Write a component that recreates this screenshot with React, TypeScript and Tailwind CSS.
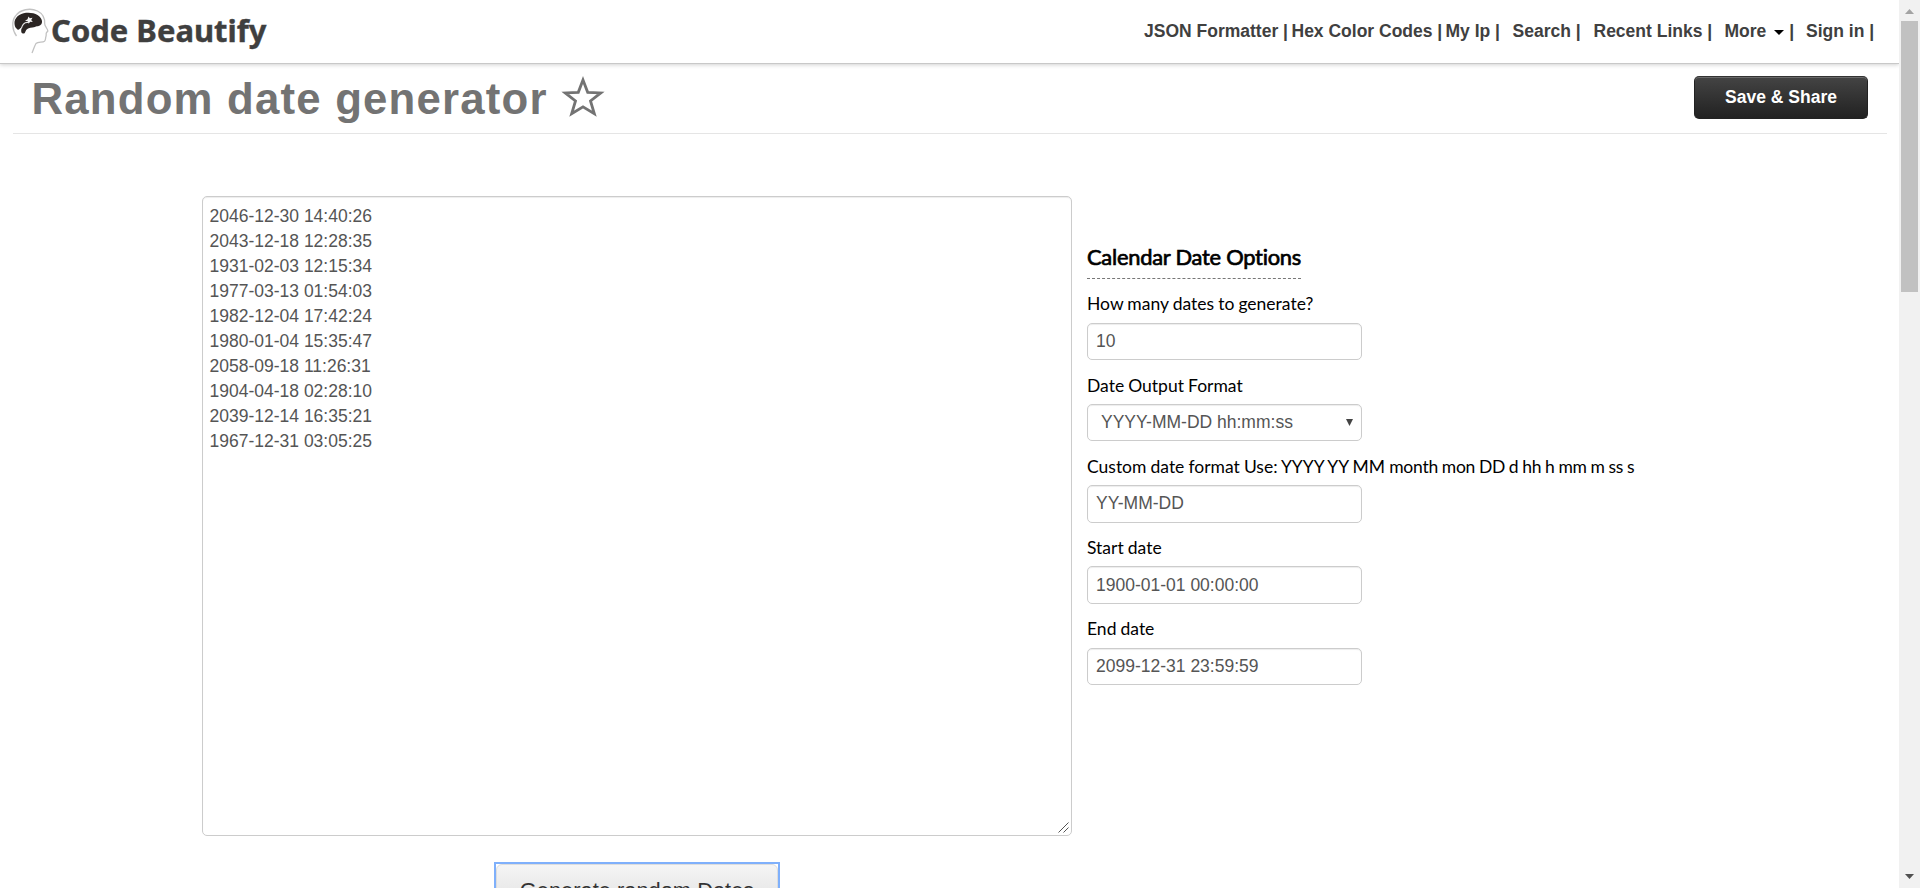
import type { ReactNode } from 'react';

const dates = [
  '2046-12-30 14:40:26',
  '2043-12-18 12:28:35',
  '1931-02-03 12:15:34',
  '1977-03-13 01:54:03',
  '1982-12-04 17:42:24',
  '1980-01-04 15:35:47',
  '2058-09-18 11:26:31',
  '1904-04-18 02:28:10',
  '2039-12-14 16:35:21',
  '1967-12-31 03:05:25',
];

function Logo() {
  return (
    <svg className="block h-[54px] w-[270px]" viewBox="0 0 270 54" role="img" aria-label="Code Beautify">
      <path
        d="M16.500 36C12 30 11.500 21 15.500 16C20 9.500 30 7.500 37.500 11C43.500 14 45 19 44.700 24C44.700 26 48 29.500 47.800 31C47.500 32 46.200 32.300 46.200 33.500C46.200 35 46.300 36 45.800 37C45.300 38.500 46 40 44.500 41.200C42.500 42.700 38 41.500 36 43.500C34.500 46 33.500 49.500 32 53"
        fill="none"
        stroke="#c2c2c2"
        strokeWidth="1.3"
      />
      <path
        d="M14.500 24C13.800 18 19.500 13.500 26 12.800C34 12 41.300 15.500 42 21C42.300 24.500 40 26 37 26.300C35.500 26.500 34.500 27.500 32.500 27.500C29.500 27.500 27.500 28.500 26.200 30C25 31.500 25.500 34 23 33.500C20.500 33 21.300 29.500 21.500 27.500C20 28 19 30.500 17.500 29.500C15.500 28 14.800 26.500 14.500 24Z"
        fill="#2b2523"
      />
      <path d="M28.500 22.500C25.500 22 22.500 24 21.300 28.500" fill="none" stroke="#e3e3e3" strokeWidth="1.1" />
      <path
        d="M28.500 16.500L29.800 18.300L32.500 17.800L31.200 20L32.800 22L30.200 21.800L28.600 23.800L27.800 21.300L25 20.800L27.500 19.300Z"
        fill="#f4f4f4"
      />
      <text
        x="51"
        y="41.500"
        textLength="215.5"
        lengthAdjust="spacingAndGlyphs"
        fill="#3f3f3f"
        stroke="#3f3f3f"
        strokeWidth="0.4"
        className="font-['Noto_Sans','Open_Sans',sans-serif] text-[31px] font-bold"
      >
        Code Beautify
      </text>
    </svg>
  );
}

function Field({ label, children }: { label: ReactNode; children: ReactNode }) {
  return (
    <label className="block h-[81.25px]">
      <span className="block h-[31.25px] whitespace-nowrap font-['Lato',sans-serif] text-[17.5px] leading-[25px] [word-spacing:-0.4px] text-black">
        {label}
      </span>
      {children}
    </label>
  );
}

const inputClass =
  'block h-[37.5px] w-[275px] rounded-[5px] border border-[#ccc] bg-white px-2 text-[17.5px] text-[#555] shadow-[inset_0_1px_1px_rgba(0,0,0,0.075)] outline-none';

export default function App() {
  return (
    <div className="flex h-[888px] w-[1920px] overflow-hidden bg-white font-['Liberation_Sans',Arial,sans-serif]">
      <div className="flex h-full w-[1899px] flex-col overflow-hidden">
        <header className="flex h-16 shrink-0 items-start justify-between border-b border-[#c8c8c8] bg-white shadow-[0_1px_4px_rgba(0,0,0,0.18)]">
          <Logo />
          <nav className="mt-[19px] flex w-[755px] text-[17.5px] font-bold leading-[25px] whitespace-pre text-[#404040]">
            <a className="w-[147.5px]">JSON Formatter |</a>
            <a className="w-[154px]">Hex Color Codes |</a>
            <a className="w-[67px]">My Ip |</a>
            <a className="w-[81px]">Search |</a>
            <a className="w-[131px]">Recent Links |</a>
            <a className="flex w-[81.5px] items-center">
              More
              <svg className="mt-px mr-[5px] ml-2 h-[5px] w-[10px]" viewBox="0 0 10 5">
                <path d="M0 0H10L5 5Z" fill="#000" />
              </svg>
              <span>|</span>
            </a>
            <a>Sign in |</a>
          </nav>
        </header>

        <div className="mr-3 ml-[13px] flex h-[70px] shrink-0 items-start justify-between border-b border-[#e5e5e5] pr-[19px] pl-[18.5px]">
          <h1 className="flex items-start text-[43.75px] font-bold leading-[70px] tracking-[1.2px] whitespace-pre text-[#737373]">
            Random date generator
            <svg className="mt-[12px] ml-[13.5px] h-[41px] w-[44px]" viewBox="0 0 44 41">
              <path
                d="M22 4L26.700 16.300L39.800 16.900L29.500 25L33.300 37.700L22 30.800L10.700 37.700L14.500 25L4.200 16.900L17.300 16.300Z"
                fill="none"
                stroke="#737373"
                strokeWidth="2.800"
              />
            </svg>
          </h1>
          <button className="mt-3 h-[43px] w-[174px] rounded-[5px] border border-[#222] border-t-[#333] bg-linear-to-b from-[#444] to-[#222] text-[17.5px] font-bold text-white shadow-[inset_0_1px_0_rgba(255,255,255,0.2)]">
            Save &amp; Share
          </button>
        </div>

        <main className="flex shrink-0 pt-[62px] pl-[202px]">
          <div className="flex flex-col items-center">
            <div className="flex h-[640px] w-[870px] items-end rounded-[5px] border border-[#ccc] shadow-[inset_0_1px_1px_rgba(0,0,0,0.075)]">
              <div className="flex-1 self-start px-[6.5px] pt-[7px] text-[17.5px] leading-[25px] text-[#555]">
                {dates.map((d) => (
                  <div key={d}>{d}</div>
                ))}
              </div>
              <svg className="mr-[2px] mb-[2px] h-[11px] w-[11px]" viewBox="0 0 11 11">
                <path d="M0.500 10.500L10.500 0.500M5.500 10.500L10.500 5.500" stroke="#555" strokeWidth="1" />
              </svg>
            </div>
            <div className="mt-[26px] border-2 border-[#7fb0fb]">
              <button className="block h-[54px] w-[282px] rounded-[6px] border border-[#ddd] bg-linear-to-b from-[#f5f5f5] to-[#ddd] text-[21.875px] text-[#333]">
                Generate random Dates
              </button>
            </div>
          </div>

          <section className="ml-[15px] pt-[48px] text-black">
            <h2 className="mb-[12.25px] inline-block border-b border-dashed border-[#777] pb-[9px] font-['Lato',sans-serif] text-[21.875px] font-normal leading-[25px] tracking-[-0.24px] [font-variant-ligatures:none] [-webkit-text-stroke:0.7px_black]">
              Calendar Date Options
            </h2>
            <Field label="How many dates to generate?">
              <input className={inputClass} defaultValue="10" />
            </Field>
            <Field label="Date Output Format">
              <div className={inputClass}>
                <div className="flex h-full items-center justify-between pl-[5px]">
                  <span className="pb-px">YYYY-MM-DD hh:mm:ss</span>
                  <svg className="h-[7px] w-[7px]" viewBox="0 0 7 7">
                    <path d="M0 0H7L3.500 7Z" fill="#444" />
                  </svg>
                </div>
              </div>
            </Field>
            <Field
              label={
                <>
                  Custom date format Use: YYYY YY MM{' '}
                  <span className="tracking-[-0.25px]">month mon DD d hh h mm m ss s</span>
                </>
              }
            >
              <input className={inputClass} defaultValue="YY-MM-DD" />
            </Field>
            <Field label="Start date">
              <input className={inputClass} defaultValue="1900-01-01 00:00:00" />
            </Field>
            <Field label="End date">
              <input className={inputClass} defaultValue="2099-12-31 23:59:59" />
            </Field>
          </section>
        </main>
      </div>

      <aside className="flex h-full w-[21px] flex-col items-center bg-[#f1f1f1]">
        <svg className="mt-[9px] h-[5px] w-[9px]" viewBox="0 0 9 5">
          <path d="M0 5H9L4.500 0Z" fill="#a3a3a3" />
        </svg>
        <div className="mt-[7px] h-[271px] w-[17px] bg-[#c1c1c1]" />
        <svg className="mt-auto mb-[9px] h-[5px] w-[9px]" viewBox="0 0 9 5">
          <path d="M0 0H9L4.500 5Z" fill="#505050" />
        </svg>
      </aside>
    </div>
  );
}
